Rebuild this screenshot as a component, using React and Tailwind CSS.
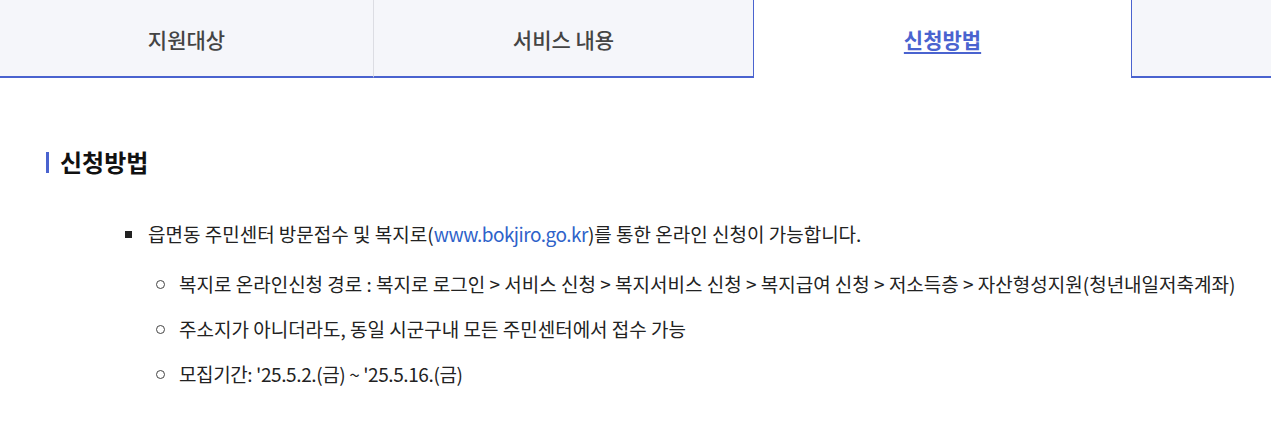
export default function App() {
  const font = { fontFamily: '"Noto Sans CJK KR", "Noto Sans", sans-serif' };
  return (
    <div className="w-[1271px] h-[422px] bg-white overflow-hidden" style={font}>
      <div className="flex h-[78px]">
        <div className="w-[374px] shrink-0 bg-[#f5f6fa] border-r border-r-[#dcdde3] border-b-2 border-b-[#4a63cf] flex items-center justify-center pt-[3px]">
          <span className="text-[21px] font-medium text-[#444]">지원대상</span>
        </div>
        <div className="w-[379px] shrink-0 bg-[#f5f6fa] border-b-2 border-b-[#4a63cf] flex items-center justify-center pt-[3px]">
          <span className="text-[21px] font-medium text-[#444]">서비스 내용</span>
        </div>
        <div className="w-[379px] shrink-0 bg-white border-x border-[#4a63cf] flex items-center justify-center pt-[1px]">
          <span className="text-[21px] font-bold text-[#4a63cf] underline underline-offset-[4px] decoration-2">신청방법</span>
        </div>
        <div className="flex-1 bg-[#f5f6fa] border-b-2 border-b-[#4a63cf]"></div>
      </div>

      <div className="pl-[46px] pt-[68px]">
        <div className="flex items-center h-[32px]">
          <span className="w-[3px] h-[21px] bg-[#4a63cf] mr-[11px]"></span>
          <h2 className="text-[24px] font-bold text-[#111] leading-none">신청방법</h2>
        </div>
      </div>

      <div className="pl-[125px] pt-[42px] text-[19px] text-[#222] leading-[28px]">
        <div className="flex items-center">
          <span className="w-[7px] h-[7px] bg-[#222] mr-[16px] shrink-0"></span>
          <span>
            읍면동 주민센터 방문접수 및 복지로(<span className="text-[#2e62c9] tracking-[-0.5px]">www.bokjiro.go.kr</span>)를 통한 온라인 신청이 가능합니다.
          </span>
        </div>
        <div className="pl-[31px] mt-[22px] flex flex-col gap-[17px]">
          <div className="flex items-center">
            <span className="w-[9px] h-[9px] rounded-full border border-[#444] mr-[14px] shrink-0"></span>
            <span>복지로 온라인신청 경로 : 복지로 로그인 &gt; 서비스 신청 &gt; 복지서비스 신청 &gt; 복지급여 신청 &gt; 저소득층 &gt; 자산형성지원(청년내일저축계좌)</span>
          </div>
          <div className="flex items-center">
            <span className="w-[9px] h-[9px] rounded-full border border-[#444] mr-[14px] shrink-0"></span>
            <span>주소지가 아니더라도, 동일 시군구내 모든 주민센터에서 접수 가능</span>
          </div>
          <div className="flex items-center">
            <span className="w-[9px] h-[9px] rounded-full border border-[#444] mr-[14px] shrink-0"></span>
            <span className="tracking-[-0.4px]">모집기간: '25.5.2.(금) ~ '25.5.16.(금)</span>
          </div>
        </div>
      </div>
    </div>
  );
}
